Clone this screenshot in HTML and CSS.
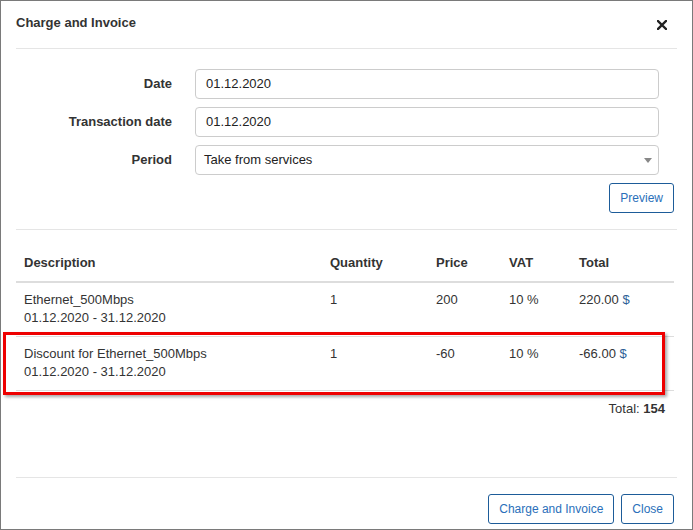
FILE: index.html
```html
<!DOCTYPE html>
<html>
<head>
<meta charset="utf-8">
<link rel="stylesheet" href="styles.css">
</head>
<body>
<div class="modal">
  <div class="modal-header">
    <h4 class="modal-title">Charge and Invoice</h4>
    <button class="close" aria-label="Close">
      <svg width="10" height="10" viewBox="0 0 10 10"><path d="M1 1L9 9M9 1L1 9" stroke="#222" stroke-width="2.4" stroke-linecap="square"/></svg>
    </button>
  </div>
  <div class="form-section">
    <div class="form-grid">
      <label class="form-label">Date</label>
      <div class="form-control">01.12.2020</div>
      <label class="form-label">Transaction date</label>
      <div class="form-control">01.12.2020</div>
      <label class="form-label">Period</label>
      <div class="form-control select">Take from services<span class="caret"></span></div>
    </div>
    <div class="preview-row">
      <button class="btn">Preview</button>
    </div>
  </div>
  <div class="table-wrap">
    <table class="items">
      <colgroup>
        <col class="c-desc"><col class="c-qty"><col class="c-price"><col class="c-vat"><col class="c-total">
      </colgroup>
      <thead>
        <tr><th>Description</th><th>Quantity</th><th>Price</th><th>VAT</th><th>Total</th></tr>
      </thead>
      <tbody>
        <tr>
          <td>Ethernet_500Mbps<br>01.12.2020 - 31.12.2020</td>
          <td>1</td><td>200</td><td>10 %</td><td>220.00 <span class="cur">$</span></td>
        </tr>
        <tr>
          <td>Discount for Ethernet_500Mbps<br>01.12.2020 - 31.12.2020</td>
          <td>1</td><td>-60</td><td>10 %</td><td>-66.00 <span class="cur">$</span></td>
        </tr>
      </tbody>
    </table>
    <div class="highlight"></div>
    <div class="grand-total">Total: <b>154</b></div>
  </div>
  <div class="spacer"></div>
  <div class="modal-footer">
    <button class="btn">Charge and Invoice</button>
    <button class="btn">Close</button>
  </div>
</div>
</body>
</html>
```
FILE: styles.css
```css
* { box-sizing: border-box; }
html, body { margin: 0; padding: 0; background: #fff; }
body {
  font-family: "Liberation Sans", Arial, sans-serif;
  font-size: 13px;
  line-height: 1.42857;
  color: #333;
}
.modal {
  width: 693px;
  height: 530px;
  border: 1px solid #7a7a7a;
  padding: 0 15px;
  display: flex;
  flex-direction: column;
  background: #fff;
  position: relative;
}
.modal-header {
  display: flex;
  align-items: center;
  justify-content: space-between;
  padding: 13px 0 16px;
  border-bottom: 1px solid #e5e5e5;
}
.modal-title {
  margin: 0;
  font-size: 13px;
  font-weight: bold;
  line-height: 18px;
  color: #333;
}
.close {
  border: 0;
  background: none;
  padding: 0;
  margin: 4px 10px 0 0;
  width: 10px;
  height: 10px;
  display: flex;
}
.form-section {
  padding-top: 20px;
  padding-bottom: 16px;
  border-bottom: 1px solid #e5e5e5;
}
.form-grid {
  display: grid;
  grid-template-columns: 156px 1fr;
  column-gap: 23px;
  row-gap: 8px;
  padding-right: 18px;
}
.form-label {
  text-align: right;
  font-weight: bold;
  align-self: center;
}
.form-control {
  height: 30px;
  border: 1px solid #ccc;
  border-radius: 4px;
  padding: 5px 10px;
  line-height: 18px;
  color: #222;
  position: relative;
}
.form-control.select { padding-left: 8px; }
.caret {
  position: absolute;
  right: 6px;
  top: 12px;
  width: 0;
  height: 0;
  border-left: 4px solid transparent;
  border-right: 4px solid transparent;
  border-top: 5px solid #888;
}
.preview-row {
  display: flex;
  justify-content: flex-end;
  margin-top: 8px;
  padding-right: 3px;
}
.btn {
  font-family: inherit;
  font-size: 12px;
  color: #2a6fba;
  background: #fff;
  border: 1px solid #1d5c99;
  border-radius: 3px;
  height: 30px;
  padding: 0 10px;
  line-height: 28px;
}
.table-wrap {
  position: relative;
  margin-top: 16px;
  padding-right: 3px;
}
.items {
  width: 658px;
  border-collapse: collapse;
  table-layout: fixed;
}
.c-desc { width: 306px; }
.c-qty { width: 106px; }
.c-price { width: 73px; }
.c-vat { width: 70px; }
.c-total { width: 103px; }
.items th, .items td {
  padding: 8px;
  text-align: left;
  vertical-align: top;
}
.items th {
  font-weight: bold;
  border-bottom: 2px solid #ddd;
}
.items td { border-top: 1px solid #ddd; }
.items tbody tr:last-child td { border-bottom: 1px solid #ddd; }
.cur { color: #2f5f97; }
.highlight {
  position: absolute;
  left: -13px;
  top: 86px;
  width: 662px;
  height: 63px;
  border: 3px solid #ee0000;
  box-shadow: 2px 2px 3px rgba(0, 0, 0, 0.35);
  pointer-events: none;
}
.grand-total {
  text-align: right;
  padding-right: 9px;
  margin-top: 9px;
}
.spacer { flex: 1; }
.modal-footer {
  display: flex;
  justify-content: flex-end;
  gap: 7px;
  border-top: 1px solid #e5e5e5;
  padding: 16px 3px 5px 0;
}
```
